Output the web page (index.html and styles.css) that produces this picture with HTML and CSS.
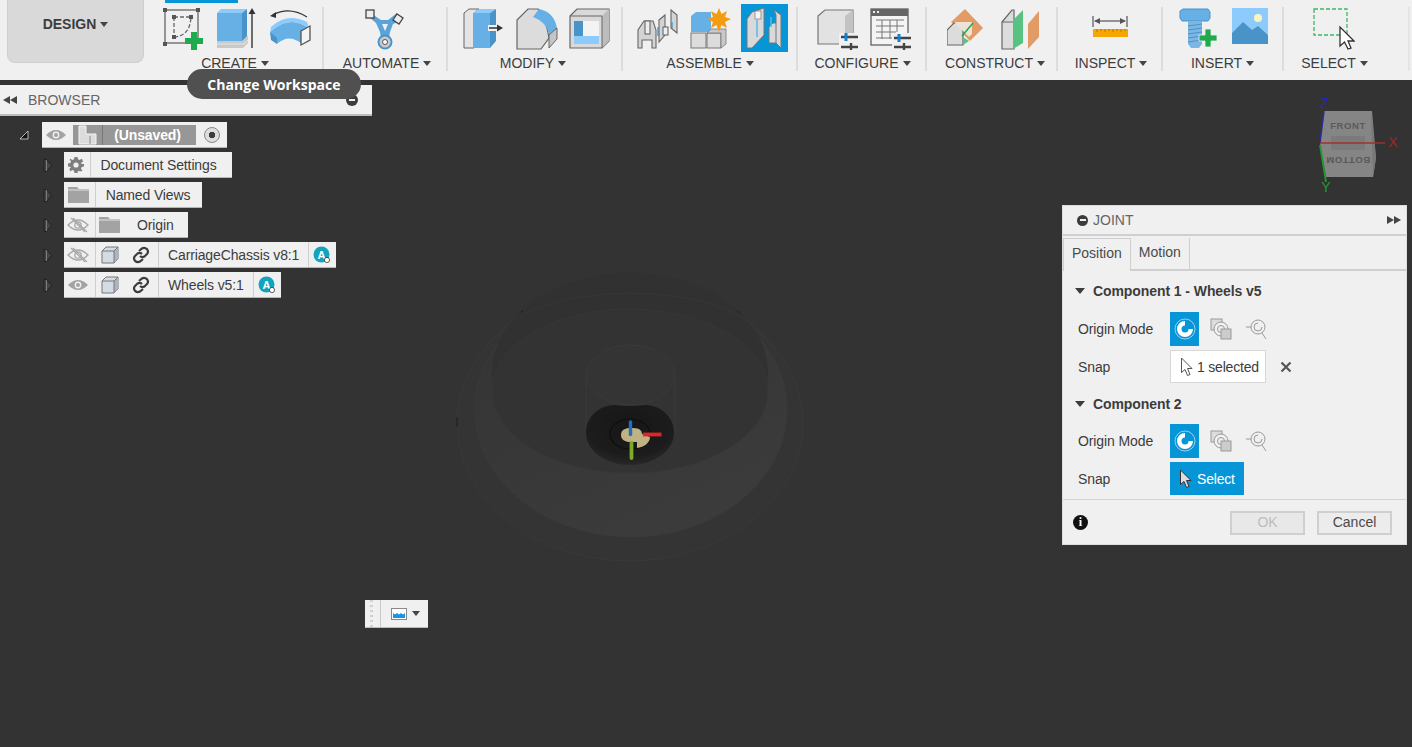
FILE: index.html
```html
<!DOCTYPE html>
<html lang="en">
<head>
<meta charset="utf-8">
<title>Joint</title>
<link rel="stylesheet" href="styles.css">
</head>
<body>
<svg class="defs" aria-hidden="true">
  <defs>
    <linearGradient id="band" x1="0" y1="0" x2=".5" y2="1"><stop offset="0" stop-color="#333"/><stop offset=".6" stop-color="#383838"/><stop offset="1" stop-color="#3b3b3b"/></linearGradient>
    <radialGradient id="blob" cx=".5" cy=".35" r=".7"><stop offset="0" stop-color="#161616"/><stop offset=".7" stop-color="#1c1c1c"/><stop offset="1" stop-color="#2b2b2b"/></radialGradient>
    <symbol id="eye" viewBox="0 0 22 14"><path d="M1 7Q11-3 21 7 11 17 1 7Z" fill="#a3a3a3"/><circle cx="11" cy="7" r="3.4" fill="#f0f0f0"/><circle cx="11" cy="7" r="2" fill="#a3a3a3"/></symbol>
    <symbol id="eyeoff" viewBox="0 0 22 16"><path d="M1 8Q11-2 21 8 11 18 1 8Z" fill="none" stroke="#a8a8a8" stroke-width="1.3"/><circle cx="11" cy="8" r="3.2" fill="none" stroke="#a8a8a8" stroke-width="1.3"/><path d="M4 1 18 15M6 1 20 15" stroke="#a8a8a8" stroke-width="1.1"/></symbol>
    <symbol id="folder" viewBox="0 0 21 16"><path d="M0 0H9L11 2H21V16H0Z" fill="#a3a3a3"/><path d="M0 3H21" stroke="#f0f0f0" stroke-width=".8"/></symbol>
    <symbol id="box" viewBox="0 0 18 18"><path d="M1 5 5 1H17V13L13 17H1Z" fill="#d5dbe5" stroke="#777"/><path d="M13 5 17 1V13L13 17Z" fill="#aeb4be"/><path d="M1 5H13V17M13 5 17 1" fill="none" stroke="#777"/></symbol>
    <symbol id="chain" viewBox="0 0 18 18"><g fill="none" stroke="#3c3c3c" stroke-width="2.2"><path d="M7 5 10 2.500Q12.500 1 15 3.200 17 6 15 8L12.500 10.500Q10 12 8 10"/><path d="M11 13 8 15.500Q5.500 17 3 14.800 1 12 3 10L5.500 7.500Q8 6 10 8"/></g></symbol>
    <symbol id="badge" viewBox="0 0 18 18"><circle cx="8.500" cy="8.500" r="8" fill="#10a5bd"/><text x="8.500" y="13" text-anchor="middle" class="badge-a">A</text><circle cx="14" cy="14" r="2.600" fill="#fff" stroke="#222" stroke-width=".7"/></symbol>
    <symbol id="expand" viewBox="0 0 9 13"><path d="M1 .5H3.500L8.500 6.500 3.500 12.500H1Z" fill="#444" stroke="#1c1c1c" stroke-width=".8"/><path d="M3.500 1V12" stroke="#888" stroke-width=".8"/></symbol>
    <symbol id="origin1" viewBox="0 0 22 22"><circle cx="11" cy="11" r="10" fill="none" stroke="#fff" stroke-width=".8" opacity=".7"/><path d="M11 3A8 8 0 1 0 19 11H11Z" fill="#fff"/><circle cx="11" cy="11" r="3.500" fill="#0696d7"/></symbol>
    <symbol id="origin2" viewBox="0 0 22 22"><g fill="none" stroke="#999"><rect x="1" y="1" width="11" height="11" fill="#ddd"/><circle cx="11" cy="11" r="7" fill="#f0f0f0"/><circle cx="11" cy="11" r="3.500"/><rect x="11" y="11" width="10" height="10" fill="#ccc"/></g></symbol>
    <symbol id="origin3" viewBox="0 0 22 22"><g fill="none" stroke="#999"><circle cx="12" cy="9" r="7"/><path d="M12 5A4 4 0 1 0 16 9M0 9H5M16 15 20 21"/></g></symbol>
    <symbol id="cursor" viewBox="0 0 14 20"><path d="M1.500 1V15.500L5 12.500 7.500 18.500 10 17.500 7.500 11.500H12Z" stroke-width="1"/></symbol>
  </defs>
</svg>

<header class="toolbar">
  <div class="design-wrap">
    <button class="design">DESIGN<span class="caret"></span></button>
  </div>
  <div class="tab-marker"></div>

  <section class="group g-create">
    <div class="tools">
      <svg class="tool" viewBox="0 0 42 42"><g fill="none" stroke="#666" stroke-width="1.300"><rect x="2" y="2" width="33" height="33"/><path d="M11 9V29M11 29Q27 28 28 9M11 9H28" stroke-dasharray="4 2"/></g><g fill="#555"><rect x="0" y="0" width="4" height="4"/><rect x="33" y="0" width="4" height="4"/><rect x="0" y="34" width="4" height="4"/><rect x="9" y="7" width="4" height="4"/><rect x="26" y="7" width="4" height="4"/><rect x="9" y="27" width="4" height="4"/></g><path d="M28 24H34V30H40V36H34V42H28V36H22V30H28Z" fill="#1faa4e"/></svg>
      <svg class="tool" viewBox="0 0 42 42"><path d="M1 33V40H27L32 35V28Z" fill="#c9c9c9"/><path d="M1 36H28L32 32" fill="none" stroke="#ededed" stroke-width=".8"/><path d="M1 5H26V33H1Z" fill="#66b0e6"/><path d="M1 5 5 1H31L26 5Z" fill="#8ccbfb"/><path d="M26 5 31 1V28L26 33Z" fill="#4a93c9"/><path d="M36 40V3" stroke="#333" stroke-width="1.400"/><path d="M36 0 39.500 6H32.500Z" fill="#333"/></svg>
      <svg class="tool" viewBox="0 0 42 42"><path d="M1 24Q20 6 40 20L33 36Q20 25 8 36Z" fill="#66b0e6"/><path d="M1 24Q20 6 40 20L38 14Q18 4 2 19Z" fill="#8ccbfb"/><path d="M8 36 2 32 1 24 8 30Z" fill="#4a93c9"/><path d="M32 23 41 18V32L32 37Z" fill="#f4f4f4" stroke="#555" stroke-width="1.300"/><path d="M38 9Q20-2 4 7" fill="none" stroke="#333" stroke-width="1.200"/><path d="M1 8 7 4V10Z" fill="#333"/></svg>
    </div>
    <div class="label">CREATE<span class="caret"></span></div>
  </section>

  <section class="group g-auto">
    <div class="tools">
      <svg class="tool" viewBox="0 0 42 42"><path d="M8 6 17 12H24L33 5 36 13 29 16 26 24 25 30H17L16 24 12 15 5 9Z" fill="#5aa3d9"/><path d="M18 16H24L21 23Z" fill="#f0f0f0"/><circle cx="21" cy="34" r="6.500" fill="#c9c9c9" stroke="#4a93c9" stroke-width="2"/><circle cx="21" cy="34" r="2.500" fill="#fff" stroke="#555"/><rect x="2" y="2" width="8" height="8" fill="#eee" stroke="#444" stroke-width="1.300"/><path d="M33 6 39 10 35 16 29 12Z" fill="#eee" stroke="#444" stroke-width="1.300"/></svg>
    </div>
    <div class="label">AUTOMATE<span class="caret"></span></div>
  </section>

  <section class="group g-modify">
    <div class="tools">
      <svg class="tool" viewBox="0 0 42 42"><path d="M1 5 6 1H16L11 5V40H1Z" fill="#e4e4e4" stroke="#666"/><path d="M10 5H27V40H10Z" fill="#66b0e6"/><path d="M10 5 16 1H33L27 5Z" fill="#8ccbfb"/><path d="M27 5 33 1V33L27 40Z" fill="#4a93c9"/><rect x="25" y="17" width="11" height="6" fill="#f0f0f0"/><path d="M26 20H35" stroke="#333" stroke-width="1.500"/><path d="M40 20 34 16.500V23.500Z" fill="#333"/></svg>
      <svg class="tool" viewBox="0 0 42 42"><path d="M1 12 12 1H22Q30 10 33 30L25 41H1Z" fill="#dcdcdc" stroke="#666" stroke-width="1.200"/><path d="M17 9 23 1Q38 4 41 20L33 27Q31 14 17 9Z" fill="#66b0e6"/><path d="M33 27 41 20V31L33 40Z" fill="#c4c4c4" stroke="#666"/></svg>
      <svg class="tool" viewBox="0 0 42 42"><path d="M1 8 8 1H40V33L33 40H1Z" fill="#d9d9d9" stroke="#666" stroke-width="1.200"/><path d="M33 8 40 1V33L33 40Z" fill="#bcbcbc"/><path d="M1 8H33V40" fill="none" stroke="#666"/><rect x="5" y="13" width="25" height="23" fill="#f3f3f3"/><path d="M5 13H14V28H30V36H5Z" fill="#8ccbfb"/><path d="M5 13H14V28H5Z" fill="#4a93c9"/></svg>
    </div>
    <div class="label">MODIFY<span class="caret"></span></div>
  </section>

  <section class="group g-assemble">
    <div class="tools">
      <svg class="tool" viewBox="0 0 42 42"><g fill="#d4d4d4" stroke="#666" stroke-width="1.100"><path d="M1 40V22L7 13H16L19 22V40H15V32H5V40Z"/><path d="M22 12 28 7V27L22 34Z"/><path d="M34 2 40 7V25L34 20Z"/><rect x="8" y="13" width="5" height="13" fill="#eee"/><rect x="26" y="19" width="5" height="8" fill="#eee"/></g><path d="M21 19V28M35 14V20" stroke="#2b8fd0" stroke-width="1.200"/></svg>
      <svg class="tool" viewBox="0 0 42 42"><path d="M1 8 6 4H21V24H1Z" fill="#66b0e6"/><path d="M1 8H17V24H1ZM17 8 21 4" fill="none"/><rect x="1" y="25" width="15" height="15" fill="#dcdcdc" stroke="#777"/><path d="M17 25H31V40H17Z" fill="#dcdcdc" stroke="#777"/><path d="M17 25 21 21H36V36L31 40V25Z" fill="#c9c9c9" stroke="#777" stroke-width=".8"/><path d="M29 0 31.500 6 37 3 35 9 41 11 35 14 37 20 31.500 17 29 24 26.500 17 21 20 23 14 17 11 23 9 21 3 26.500 6Z" fill="#f39c12"/></svg>
      <div class="tool-active"><svg class="tool-in" viewBox="0 0 36 42"><path d="M1 12 6 5 18 1V28L6 41H1Z" fill="#d9d9d9" stroke="#777"/><rect x="9" y="4" width="6" height="8" fill="#f4f4f4" stroke="#777" stroke-width=".7"/><path d="M23 20 27 16H34V36H23Z" fill="#d9d9d9" stroke="#777"/><path d="M28 3 35 8V41L30 36V8Z" fill="#d9d9d9" stroke="#777"/><path d="M11 13V30" stroke="#5ab7ea" stroke-width="1.500"/><path d="M25 10V20" stroke="#5ab7ea" stroke-width="1.500"/></svg></div>
    </div>
    <div class="label">ASSEMBLE<span class="caret"></span></div>
  </section>

  <section class="group g-config">
    <div class="tools">
      <svg class="tool" viewBox="0 0 42 42"><path d="M1 8 8 2H36V36H1Z" fill="#e2e2e2" stroke="#777" stroke-width="1.200"/><path d="M28 8 36 2V36H28Z" fill="#c3c3c3"/><rect x="22" y="25" width="20" height="17" fill="#f0f0f0"/><path d="M24 29H41M24 39H41" stroke="#444" stroke-width="2.400"/><path d="M29 25V33" stroke="#0e83d1" stroke-width="3"/><path d="M34 35V42" stroke="#444" stroke-width="2.400"/></svg>
      <svg class="tool" viewBox="0 0 42 42"><rect x="1" y="1" width="37" height="36" fill="#f4f4f4" stroke="#555" stroke-width="1.200"/><rect x="1" y="1" width="37" height="7" fill="#666"/><rect x="3" y="3" width="2" height="2" fill="#eee"/><rect x="7" y="3" width="2" height="2" fill="#eee"/><path d="M6 12H34M6 18H34M6 24H26M6 30H22M12 12V31M20 12V31M27 12V24" stroke="#777" fill="none"/><rect x="22" y="25" width="20" height="17" fill="#f0f0f0"/><path d="M24 30H41M24 39H41" stroke="#444" stroke-width="2.400"/><path d="M29 26V34" stroke="#0e83d1" stroke-width="3"/><path d="M34 35V42" stroke="#444" stroke-width="2.400"/></svg>
    </div>
    <div class="label">CONFIGURE<span class="caret"></span></div>
  </section>

  <section class="group g-construct">
    <div class="tools tools-wide">
      <svg class="tool" viewBox="0 0 42 42"><path d="M18 1 36 20 23 33 4 14Z" fill="#e39b66"/><path d="M0 37V22L7 15H16V37Z" fill="#dcdcdc" stroke="#666" stroke-width="1.200"/><path d="M8 14H25V26L22 29 8 15Z" fill="#ebe3d6"/><path d="M16 29 22 33 16 37Z" fill="#58c283"/><path d="M15 28 26 15" stroke="#1faa4e" stroke-width="1.500"/></svg>
      <svg class="tool" viewBox="0 0 42 42"><path d="M1 14 11 2H13V41H1Z" fill="#dcdcdc" stroke="#666" stroke-width="1.200"/><path d="M12 12 22 2V35L12 41Z" fill="#58c283"/><path d="M1 14H12" stroke="#666"/><path d="M27 41V16L38 3V29Z" fill="#e39b66"/></svg>
    </div>
    <div class="label">CONSTRUCT<span class="caret"></span></div>
  </section>

  <section class="group g-inspect">
    <div class="tools">
      <svg class="tool" viewBox="0 0 42 42"><path d="M4 8V19M38 8V19" stroke="#555" stroke-width="1.200"/><path d="M6 13H36" stroke="#555" stroke-width="1.200"/><path d="M5 13 11 10V16ZM37 13 31 10V16Z" fill="#555"/><rect x="4" y="21" width="35" height="8" fill="#f7a600"/><path d="M8 21V24M12 21V23M16 21V24M20 21V23M24 21V24M28 21V23M32 21V24M36 21V23" stroke="#9c6b00" stroke-width=".8"/></svg>
    </div>
    <div class="label">INSPECT<span class="caret"></span></div>
  </section>

  <section class="group g-insert">
    <div class="tools tools-narrow">
      <svg class="tool" viewBox="0 0 42 42"><path d="M1 3 4 1H29L31 4V10L29 13H3L1 10Z" fill="#66b0e6" stroke="#4a93c9"/><path d="M9 13H23V36L20 40H12L9 36Z" fill="#7bb7e2"/><path d="M9 18 23 16M9 22 23 20M9 26 23 24M9 30 23 28M9 34 23 32" stroke="#4a93c9"/><path d="M26 21H32V27H38V33H32V39H26V33H20V27H26Z" fill="#1faa4e" stroke="#f0f0f0" stroke-width=".8"/></svg>
      <svg class="tool" viewBox="0 0 42 42"><rect x="0" y="0" width="36" height="36" fill="#8ccbfb"/><path d="M0 25 11 14 20 22 26 18 36 27V36H0Z" fill="#4a93c9"/><circle cx="26" cy="10" r="4" fill="#fbf3c2"/></svg>
    </div>
    <div class="label">INSERT<span class="caret"></span></div>
  </section>

  <section class="group g-select">
    <div class="tools">
      <svg class="tool" viewBox="0 0 42 42"><rect x="1" y="1" width="33" height="26" fill="none" stroke="#3cb863" stroke-width="1.300" stroke-dasharray="4 2"/><path d="M27 19V38L31.500 34 35 41 38 40 35 33 41 33Z" fill="#fff" stroke="#333" stroke-width="1.300"/></svg>
    </div>
    <div class="label">SELECT<span class="caret"></span></div>
  </section>
</header>

<main class="viewport">
  <svg class="model" viewBox="0 0 1412 667" aria-hidden="true">
    <g transform="translate(0 -80)">
      <ellipse cx="630" cy="423" rx="173" ry="138" fill="#343434" stroke="#393939"/>
      <ellipse cx="631" cy="410" rx="156" ry="127" fill="url(#band)" stroke="#3a3a3a"/>
      <ellipse cx="630" cy="373" rx="138" ry="100" fill="#313131"/>
      <ellipse cx="630" cy="391" rx="138" ry="82" fill="#333" stroke="#373737"/>
      <path d="M497 340A135 55 0 0 1 764 340" fill="none" stroke="#373737"/>
      <path d="M586 375V433M675 375V433" stroke="#3a3a3a"/>
      <ellipse cx="630.500" cy="375" rx="44" ry="30" fill="#343434" stroke="#3a3a3a"/>
      <path d="M586 433C586 416 600 405 615 405Q630 407 645 405C660 405 674 416 674 433 674 452 652 465 630 465 608 465 586 452 586 433Z" fill="url(#blob)"/>
      <ellipse cx="630" cy="434" rx="20" ry="15" fill="none" stroke="#0e0e0e" stroke-width="1.200"/>
      <path d="M621 435C621 428 628 428 633 428 640 428 642 431 642 434L650 437C650 443 644 447 637 448V442H628C624 441 621 439 621 435Z" fill="#bfb283"/>
      <path d="M630.500 422V434.500" stroke="#1e6fc4" stroke-width="3.400" stroke-linecap="round"/>
      <path d="M643 434.500H661.500" stroke="#e0242a" stroke-width="3.800"/>
      <path d="M631.500 443V458" stroke="#7cab2a" stroke-width="3.800" stroke-linecap="round"/>
      <path d="M457 417V427" stroke="#1c1c1c"/>
      <path d="M521 312 523 311M738 311 739 313" stroke="#1f1f1f"/>
    </g>
  </svg>

  <svg class="cube" viewBox="0 0 112 110" aria-label="View cube">
    <path d="M24 21 72 21 76 68 73 87 26 87 20 54Z" fill="#858585"/>
    <path d="M71 21 76 68 73 87Z" fill="#787878"/>
    <rect x="31" y="46" width="34" height="14" fill="#7b7b7b"/>
    <text x="48" y="39" text-anchor="middle" class="cube-text">FRONT</text>
    <text x="-48" y="-67" text-anchor="middle" class="cube-text cube-flip">BOTTOM</text>
    <path d="M20 53 24 21" stroke="#2a2a9c" stroke-width="1.500"/>
    <path d="M20 53H85" stroke="#a03030" stroke-width="1.300"/>
    <path d="M20 55 26 92" stroke="#1f9a2f" stroke-width="1.800"/>
    <text x="25" y="18" text-anchor="middle" class="axis axis-z">Z</text>
    <text x="93" y="57" text-anchor="middle" class="axis axis-x">X</text>
    <text x="26" y="102" text-anchor="middle" class="axis axis-y">Y</text>
  </svg>

  <section class="browser-bar">
    <span class="collapse"><i></i><i></i></span>
    <span class="browser-title">BROWSER</span>
    <span class="minus"></span>
  </section>

  <div class="tooltip">Change Workspace</div>

  <nav class="tree">
    <div class="row row-root">
      <span class="disclosure"><svg class="tri" viewBox="0 0 10 10"><path d="M1 9 9 1V9Z" fill="#111" stroke="#ddd" stroke-width=".8"/></svg></span>
      <div class="pill">
        <span class="cell c-eye"><svg class="i-eye"><use href="#eye"/></svg></span>
        <span class="root-block">
          <svg class="i-doc" viewBox="0 0 19 20"><path d="M1 1H8V9H18V19H1Z" fill="#dcdcdc" stroke="#f4f4f4"/><path d="M12 19V11" stroke="#8a8a8a"/></svg>
          <span class="root-name">(Unsaved)</span>
        </span>
        <span class="cell c-radio"><span class="radio"></span></span>
      </div>
    </div>

    <div class="row">
      <span class="disclosure"><svg class="arrow"><use href="#expand"/></svg></span>
      <div class="pill">
        <span class="cell c-gear"><svg class="i-gear" viewBox="0 0 16 16"><path d="M6.500 0H9.500L10 2.300 11.600 3 13.600 1.700 14.300 2.400 14.300 2.400 15 4.500 13 6 13.600 7 16 7V9.500L13.700 10 13 11.600 14.300 13.600 13.600 14.300 11.600 14.300 10 13.700 9.500 16H6.500L6 13.700 4.400 13 2.400 14.300 1.700 13.600 1.700 11.600 3 10 0 9.500V6.500L2.300 6 3 4.400 1.700 2.400 2.400 1.700 4.400 3 6 2.300Z" fill="#7e7e7e"/><circle cx="8" cy="8" r="2.600" fill="#f0f0f0"/></svg></span>
        <span class="cell name n-doc">Document Settings</span>
      </div>
    </div>

    <div class="row">
      <span class="disclosure"><svg class="arrow"><use href="#expand"/></svg></span>
      <div class="pill">
        <span class="cell c-eye"><svg class="i-folder"><use href="#folder"/></svg></span>
        <span class="cell name n-views">Named Views</span>
      </div>
    </div>

    <div class="row">
      <span class="disclosure"><svg class="arrow"><use href="#expand"/></svg></span>
      <div class="pill">
        <span class="cell c-eye"><svg class="i-eyeoff"><use href="#eyeoff"/></svg></span>
        <span class="cell n-origin"><svg class="i-folder"><use href="#folder"/></svg><span class="origin-text">Origin</span></span>
      </div>
    </div>

    <div class="row">
      <span class="disclosure"><svg class="arrow"><use href="#expand"/></svg></span>
      <div class="pill">
        <span class="cell c-eye"><svg class="i-eyeoff"><use href="#eyeoff"/></svg></span>
        <span class="cell c-comp"><svg class="i-box"><use href="#box"/></svg><svg class="i-chain"><use href="#chain"/></svg></span>
        <span class="cell name n-comp">CarriageChassis v8:1</span>
        <span class="cell c-badge"><svg class="i-badge"><use href="#badge"/></svg></span>
      </div>
    </div>

    <div class="row">
      <span class="disclosure"><svg class="arrow"><use href="#expand"/></svg></span>
      <div class="pill">
        <span class="cell c-eye"><svg class="i-eye"><use href="#eye"/></svg></span>
        <span class="cell c-comp"><svg class="i-box"><use href="#box"/></svg><svg class="i-chain"><use href="#chain"/></svg></span>
        <span class="cell name n-comp">Wheels v5:1</span>
        <span class="cell c-badge"><svg class="i-badge"><use href="#badge"/></svg></span>
      </div>
    </div>
  </nav>

  <aside class="joint">
    <div class="joint-head">
      <span class="minus minus-joint"></span>
      <span class="joint-title">JOINT</span>
      <span class="expand-right"><i></i><i></i></span>
    </div>
    <div class="tabs">
      <span class="tab tab-on">Position</span>
      <span class="tab">Motion</span>
    </div>

    <div class="joint-body">
      <h3 class="section"><span class="tri-down"></span>Component 1 - Wheels v5</h3>
      <div class="prow">
        <span class="plabel">Origin Mode</span>
        <span class="mode mode-on"><svg class="i-mode"><use href="#origin1"/></svg></span>
        <span class="mode"><svg class="i-mode"><use href="#origin2"/></svg></span>
        <span class="mode"><svg class="i-mode"><use href="#origin3"/></svg></span>
      </div>
      <div class="prow prow-snap">
        <span class="plabel">Snap</span>
        <span class="selected"><svg class="i-cursor cursor-light"><use href="#cursor"/></svg>1 selected</span>
        <svg class="clear" viewBox="0 0 12 12"><path d="M1.500 1.500 10.500 10.500M10.500 1.500 1.500 10.500" stroke="#555" stroke-width="2.200"/></svg>
      </div>

      <h3 class="section section-2"><span class="tri-down"></span>Component 2</h3>
      <div class="prow">
        <span class="plabel">Origin Mode</span>
        <span class="mode mode-on"><svg class="i-mode"><use href="#origin1"/></svg></span>
        <span class="mode"><svg class="i-mode"><use href="#origin2"/></svg></span>
        <span class="mode"><svg class="i-mode"><use href="#origin3"/></svg></span>
      </div>
      <div class="prow prow-snap">
        <span class="plabel">Snap</span>
        <span class="select-btn"><svg class="i-cursor cursor-dark"><use href="#cursor"/></svg>Select</span>
      </div>
    </div>

    <div class="joint-foot">
      <span class="info">i</span>
      <button class="btn btn-off">OK</button>
      <button class="btn">Cancel</button>
    </div>
  </aside>

  <div class="mini-bar">
    <span class="grip"></span>
    <span class="mini-main">
      <svg class="mini-icon" viewBox="0 0 16 12"><rect x=".5" y=".5" width="15" height="11" fill="#fff" stroke="#888"/><path d="M2 5 4 6.500 6 5 8 6.500 10 5 12 6.500 14 5V10H2Z" fill="#1496e6"/></svg>
      <span class="caret mini-caret"></span>
    </span>
  </div>
</main>
</body>
</html>
```

FILE: styles.css
```css
* { box-sizing: border-box; }

html, body {
  margin: 0;
  height: 100%;
}

body {
  display: flex;
  flex-direction: column;
  overflow: hidden;
  background: #333;
  color: #3c3c3c;
  font: 14px "Liberation Sans", Arial, sans-serif;
}

.defs { position: absolute; width: 0; height: 0; }

.caret {
  display: inline-block;
  width: 0;
  height: 0;
  margin-left: 4px;
  border-left: 4px solid transparent;
  border-right: 4px solid transparent;
  border-top: 5px solid #444;
  vertical-align: 2px;
}

/* Toolbar */
.toolbar {
  position: relative;
  flex: 0 0 80px;
  display: flex;
  background: #f0f0f0;
}

.design-wrap { flex: 0 0 150px; padding-left: 7px; }

.design {
  display: block;
  width: 137px;
  height: 63px;
  padding: 0 0 15px;
  border: 1px solid #cfcfcf;
  border-top: 0;
  border-radius: 0 0 8px 8px;
  background: #d9d9d9;
  color: #3c3c3c;
  font: bold 14px "Liberation Sans", Arial, sans-serif;
}

.tab-marker {
  position: absolute;
  left: 165px;
  top: 0;
  width: 73px;
  height: 3px;
  background: #0696d7;
}

.group {
  display: flex;
  flex-direction: column;
  align-items: center;
  height: 64px;
  margin-top: 7px;
  border-right: 2px solid #dcdcdc;
}

.g-create { width: 174px; }
.g-auto { width: 124px; }
.g-modify { width: 175px; }
.g-assemble { width: 175px; }
.g-config { width: 129px; }
.g-construct { width: 131px; }
.g-inspect { width: 105px; }
.g-insert { width: 121px; }
.g-select { width: 126px; border-right-color: #e4e4e4; }

.tools {
  display: flex;
  gap: 11px;
  height: 48px;
}

.g-create .tools { margin-left: 2px; }
.g-modify .tools { margin-left: 5px; }
.g-assemble .tools { margin-left: 5px; }
.g-config .tools { margin-left: 6px; }
.tools-wide { gap: 12px; margin-left: 6px; }
.tools-narrow { gap: 11px; margin-left: 7px; }
.g-inspect .tools { margin-left: 0; }
.g-select .tools { margin-left: -24px; }

.tool { width: 42px; height: 42px; margin-top: 1px; flex: none; }

.tool-active {
  display: flex;
  align-items: center;
  justify-content: center;
  flex: none;
  width: 47px;
  height: 48px;
  margin: -3px 0 0 -2px;
  background: #0696d7;
}

.tool-in { width: 36px; height: 42px; }

.label {
  height: 16px;
  line-height: 16px;
  white-space: nowrap;
}

.g-auto .label { margin-left: 4px; }
.g-create .label { margin-right: 2px; }
.g-modify .label { margin-right: 3px; }
.g-assemble .label { margin-left: 1px; }
.g-config .label { margin-left: 2px; }
.g-construct .label { margin-left: 7px; }
.g-inspect .label { margin-left: 3px; }
.g-select .label { margin-right: 23px; }

/* Canvas */
.viewport {
  position: relative;
  flex: 1;
  background: #333;
}

.model {
  position: absolute;
  inset: 0;
  width: 100%;
  height: 100%;
}

.cube {
  position: absolute;
  left: 1300px;
  top: 10px;
  width: 112px;
  height: 110px;
}

.cube-text {
  fill: #5a5a5a;
  font: bold 9.500px "Liberation Sans", Arial, sans-serif;
  letter-spacing: .6px;
}

.cube-flip { transform: rotate(180deg); }

.axis { font: 14px "Liberation Sans", Arial, sans-serif; }
.axis-z { fill: #2626b0; }
.axis-x { fill: #a02525; }
.axis-y { fill: #1f9a2f; }

.badge-a {
  fill: #fff;
  font: bold 11px "Liberation Sans", Arial, sans-serif;
}

/* Browser bar */
.browser-bar {
  position: absolute;
  left: 0;
  top: 5px;
  display: flex;
  align-items: center;
  width: 372px;
  height: 31px;
  padding: 0 14px 0 3px;
  background: #f0f0f0;
  border-bottom: 2px solid #bdbdbd;
}

.collapse, .expand-right { display: flex; }

.collapse i, .expand-right i {
  width: 0;
  height: 0;
  border-top: 4px solid transparent;
  border-bottom: 4px solid transparent;
}

.collapse i { border-right: 7px solid #444; }
.expand-right i { border-left: 7px solid #444; }

.browser-title {
  flex: 1;
  margin-left: 11px;
  color: #666;
}

.minus {
  position: relative;
  display: block;
  flex: none;
  width: 12px;
  height: 12px;
  border-radius: 50%;
  background: #3c3c3c;
}

.minus::after {
  content: "";
  position: absolute;
  left: 3px;
  top: 5px;
  width: 6px;
  height: 2px;
  background: #f0f0f0;
}

.tooltip {
  position: absolute;
  left: 187px;
  top: -11px;
  width: 174px;
  height: 30px;
  border-radius: 15px;
  background: #505050;
  color: #fff;
  font: bold 14px/31px "Open Sans", "Liberation Sans", sans-serif;
  letter-spacing: .05px;
  text-align: center;
}

/* Tree */
.tree {
  position: absolute;
  left: 0;
  top: 42px;
  display: flex;
  flex-direction: column;
  gap: 4px;
  letter-spacing: -.13px;
  white-space: nowrap;
}

.row { display: flex; align-items: center; height: 26px; }

.disclosure {
  display: flex;
  align-items: center;
  justify-content: flex-start;
  flex: 0 0 64px;
  padding-left: 43px;
}

.row-root .disclosure { flex-basis: 42px; padding-left: 19px; }

.tri { width: 10px; height: 10px; }
.arrow { width: 9px; height: 13px; }

.pill {
  display: flex;
  align-items: stretch;
  height: 26px;
  background: #f0f0f0;
  border-bottom: 1px solid #b5b5b5;
}

.cell {
  display: flex;
  align-items: center;
  justify-content: center;
  border-left: 1px solid #cfcfcf;
}

.cell:first-child { border-left: 0; }

.c-eye { width: 31px; padding-right: 3px; }
.c-gear { width: 26px; padding-right: 2px; }
.c-radio { width: 31px; border-left: 0; }
.c-badge { width: 28px; padding-right: 1px; }
.c-comp { width: 63px; justify-content: flex-start; gap: 13px; padding-left: 5px; }

.name { padding: 0 10px; }
.n-doc { width: 142px; padding: 0 16px 0 10px; }
.n-views { width: 107px; padding: 0 12px 0 10px; }
.n-comp { padding: 0 9px; }

.n-origin {
  width: 93px;
  justify-content: flex-start;
  padding-left: 3px;
}

.origin-text { margin-left: 17px; }

.i-eye { width: 22px; height: 14px; }
.i-eyeoff { width: 22px; height: 16px; }
.i-folder { width: 21px; height: 16px; }
.i-gear { width: 16px; height: 16px; }
.i-box { width: 18px; height: 18px; }
.i-chain { width: 18px; height: 18px; }
.i-badge { width: 18px; height: 18px; }

.root-block {
  display: flex;
  align-items: center;
  width: 123px;
  height: 20px;
  margin-top: 3px;
  background: #979797;
}

.i-doc { width: 19px; height: 20px; margin-left: 5px; flex: none; }

.root-name {
  flex: 1;
  height: 20px;
  margin-left: 5px;
  padding-right: 4px;
  border-left: 1px solid #777;
  color: #fff;
  font-weight: bold;
  line-height: 20px;
  text-align: center;
}

.radio {
  width: 16px;
  height: 16px;
  border: 1px solid #888;
  border-radius: 50%;
  background: radial-gradient(circle, #3c3c3c 0 3px, #ddd 3.500px);
}

/* Joint dialog */
.joint {
  position: absolute;
  left: 1062px;
  top: 125px;
  display: flex;
  flex-direction: column;
  width: 345px;
  height: 340px;
  background: #f0f0f0;
  border: 1px solid #dedede;
}

.joint-head {
  display: flex;
  align-items: center;
  flex: 0 0 30px;
  padding: 0 5px 0 14px;
  border-bottom: 2px solid #cfcfcf;
}

.minus-joint { width: 11px; height: 11px; }
.minus-joint::after { left: 2.500px; top: 4.500px; }

.joint-title {
  flex: 1;
  margin-left: 5px;
  color: #666;
}

.tabs {
  display: flex;
  height: 33px;
  margin-top: 2px;
  border-bottom: 2px solid #cfcfcf;
}

.tab {
  padding: 0 8px;
  line-height: 28px;
  border-right: 1px solid #cfcfcf;
  color: #4a4a4a;
}

.tab-on {
  height: 33px;
  border-top: 1px solid #cfcfcf;
  border-left: 1px solid #cfcfcf;
  background: #f0f0f0;
}

.joint-body { flex: 1; padding: 0 15px; }

.section {
  display: flex;
  align-items: center;
  height: 16px;
  margin: 12px 0 13px -3px;
  font-size: 14px;
  font-weight: bold;
  letter-spacing: -.08px;
}

.section-2 { margin-top: 13px; margin-bottom: 12px; }

.tri-down {
  width: 0;
  height: 0;
  margin-right: 8px;
  border-left: 5px solid transparent;
  border-right: 5px solid transparent;
  border-top: 6px solid #3c3c3c;
}

.prow {
  display: flex;
  align-items: center;
  height: 34px;
  margin-bottom: 4px;
}

.prow-snap { height: 33px; }

.plabel { flex: 0 0 92px; letter-spacing: -.1px; }

.mode {
  display: flex;
  align-items: center;
  justify-content: center;
  width: 29px;
  height: 34px;
  margin-right: 7px;
}

.mode-on { background: #0696d7; }
.i-mode { width: 22px; height: 22px; }

.selected, .select-btn {
  display: flex;
  align-items: center;
  height: 33px;
  padding-left: 9px;
  letter-spacing: -.2px;
}

.selected {
  width: 96px;
  background: #fff;
  border: 1px solid #d8d8d8;
  white-space: nowrap;
}

.select-btn {
  width: 74px;
  background: #0696d7;
  color: #fff;
}

.i-cursor { flex: none; width: 14px; height: 20px; margin-right: 3px; }
.select-btn .i-cursor { margin-right: 4px; }
.cursor-light { fill: #fff; stroke: #555; }
.cursor-dark { fill: #ddd; stroke: #333; }

.clear { width: 12px; height: 12px; margin-left: 14px; }

.joint-foot {
  display: flex;
  align-items: center;
  flex: 0 0 46px;
  padding: 0 14px 0 10px;
  border-top: 1px solid #d4d4d4;
}

.info {
  flex: none;
  width: 15px;
  height: 15px;
  margin-right: auto;
  border-radius: 50%;
  background: #111;
  color: #fff;
  font: bold 12px/15px "Liberation Serif", serif;
  text-align: center;
}

.btn {
  width: 75px;
  height: 24px;
  margin-left: 12px;
  padding: 0 0 2px;
  border: 2px solid #cfcfcf;
  background: #ececec;
  color: #4a4a4a;
  font: 14px "Liberation Sans", Arial, sans-serif;
}

.btn-off { color: #bdbdbd; background: #e8e8e8; }

/* Bottom mini toolbar */
.mini-bar {
  position: absolute;
  left: 365px;
  top: 520px;
  display: flex;
  width: 63px;
  height: 28px;
  background: #f0f0f0;
  border-bottom: 1px solid #bbb;
}

.grip {
  width: 16px;
  border-right: 1px solid #c9c9c9;
  background: repeating-linear-gradient(#d0d0d0 0 2px, transparent 2px 5px) 5px 0 / 3px 100% no-repeat;
}

.mini-main { display: flex; align-items: center; padding-left: 10px; }
.mini-icon { width: 16px; height: 12px; }
.mini-caret { margin-left: 5px; vertical-align: 0; }
```
